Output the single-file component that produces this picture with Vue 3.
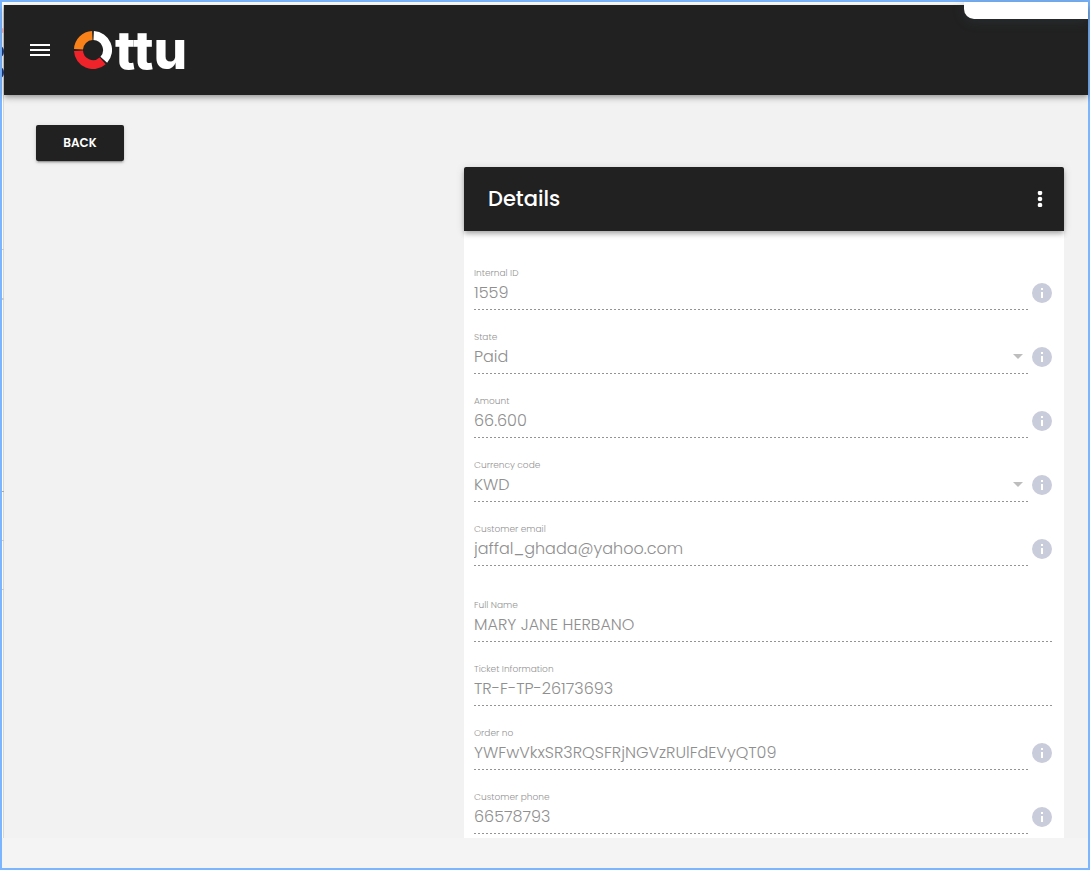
<script setup>
import { ref } from 'vue'

const groups = ref([
  [
    { id: 'internal-id', label: 'Internal ID', value: '1559', info: true },
    { id: 'state', label: 'State', value: 'Paid', info: true, select: true },
    { id: 'amount', label: 'Amount', value: '66.600', info: true },
    { id: 'currency', label: 'Currency code', value: 'KWD', info: true, select: true },
    { id: 'email', label: 'Customer email', value: 'jaffal_ghada@yahoo.com', info: true },
  ],
  [
    { id: 'full-name', label: 'Full Name', value: 'MARY JANE HERBANO' },
    { id: 'ticket', label: 'Ticket Information', value: 'TR-F-TP-26173693' },
    { id: 'order-no', label: 'Order no', value: 'YWFwVkxSR3RQSFRjNGVzRUlFdEVyQT09', info: true },
    { id: 'phone', label: 'Customer phone', value: '66578793', info: true },
  ],
])
</script>

<template>
  <div class="frame">
    <div class="edge" aria-hidden="true">
      <i class="speck pink"></i>
      <i class="speck navy first"></i>
      <i class="speck navy second"></i>
    </div>
    <div class="page">
      <header class="topbar">
        <button class="icon-button" type="button" aria-label="Menu">
          <svg width="20" height="12" viewBox="0 0 20 12"><path fill="#fff" d="M0 0h20v2H0zM0 5h20v2H0zM0 10h20v2H0z" /></svg>
        </button>
        <a class="brand" href="#" aria-label="Ottu">
          <svg width="38" height="38" viewBox="0 0 38 38" fill="none" stroke-width="9">
            <path stroke="#fff" d="M19.7 4.5A14.5 14.5 0 0 1 29.8 28.7" />
            <path stroke="#ef2329" d="M28.7 29.8A14.5 14.5 0 0 1 4.5 19.7" />
            <path stroke="#f98119" d="M4.5 18.3A14.5 14.5 0 0 1 18.3 4.5" />
          </svg>
          <span class="wordmark">ttu</span>
        </a>
      </header>
      <main class="content">
        <button class="back" type="button">BACK</button>
        <section class="card">
          <div class="card-head">
            <h1>Details</h1>
            <button class="icon-button" type="button" aria-label="More options">
              <svg width="6" height="16" viewBox="0 0 6 16" fill="#fff"><circle cx="3" cy="2" r="2.3" /><circle cx="3" cy="8" r="2.3" /><circle cx="3" cy="14" r="2.3" /></svg>
            </button>
          </div>
          <form class="card-body">
            <div v-for="(group, g) in groups" :key="g" class="group">
              <div v-for="field in group" :key="field.id" class="row">
                <div class="field">
                  <label :for="field.id">{{ field.label }}</label>
                  <div class="control">
                    <select v-if="field.select" :id="field.id" disabled>
                      <option>{{ field.value }}</option>
                    </select>
                    <input v-else :id="field.id" type="text" :value="field.value" disabled />
                    <svg v-if="field.select" class="caret" width="10" height="5" viewBox="0 0 10 5"><path fill="#bdbdbd" d="M0 0h10L5 5z" /></svg>
                  </div>
                </div>
                <svg v-if="field.info" class="info" width="24" height="24" viewBox="0 0 24 24"><path fill="#c9ccda" d="M13 9h-2V7h2m0 10h-2v-6h2m-1-9A10 10 0 0 0 2 12a10 10 0 0 0 10 10 10 10 0 0 0 10-10A10 10 0 0 0 12 2z" /></svg>
              </div>
            </div>
          </form>
        </section>
      </main>
    </div>
    <div class="popup"></div>
  </div>
</template>

<style>
body {
  background: #f4f4f4;
}
</style>

<style scoped>
.frame {
  position: relative;
  display: flex;
  align-items: flex-start;
  box-sizing: border-box;
  min-height: 100vh;
  padding-top: 3px;
  border: 2px solid #7ab5fd;
  background: linear-gradient(#fff 3px, #f4f4f4 3px);
  font-family: Poppins, Inter, "Open Sans", sans-serif;
}
.edge {
  position: relative;
  align-self: stretch;
  width: 2px;
  margin-bottom: 30px;
  background:
    linear-gradient(#ccc, #ccc) 0 244px / 2px 1px no-repeat,
    linear-gradient(#ccc, #ccc) 0 293px / 2px 2px no-repeat,
    linear-gradient(#aaa, #aaa) 0 486px / 2px 1px no-repeat,
    linear-gradient(#ccc, #ccc) 0 535px / 2px 1px no-repeat,
    linear-gradient(#ccc, #ccc) 0 584px / 2px 1px no-repeat,
    linear-gradient(to right, #fff 1px, #d8d8d8 1px);
  overflow: hidden;
}
.speck {
  position: absolute;
  border-radius: 50%;
}
.pink {
  top: 23px;
  right: 0;
  width: 4px;
  height: 5px;
  background: #f7b9bd;
}
.navy {
  right: 0;
  width: 8px;
  height: 11px;
  background: #1c3a78;
}
.first {
  top: 41px;
}
.second {
  top: 62px;
}
.page {
  flex: 1;
  min-width: 0;
  background: #f2f2f2;
}
.topbar {
  position: relative;
  display: flex;
  align-items: center;
  gap: 16px;
  height: 90px;
  padding: 0 18px;
  background: #212121;
  box-shadow: 0 2px 4px -1px rgba(0, 0, 0, 0.2), 0 4px 5px rgba(0, 0, 0, 0.14), 0 1px 10px rgba(0, 0, 0, 0.12);
}
.icon-button {
  display: flex;
  align-items: center;
  justify-content: center;
  width: 36px;
  height: 36px;
  padding: 0;
  border: 0;
  background: none;
}
.brand {
  display: flex;
  align-items: center;
  gap: 3px;
  color: #fff;
  text-decoration: none;
}
.wordmark {
  font-family: Inter, sans-serif;
  font-size: 53px;
  font-weight: 800;
  line-height: 38px;
}
.content {
  display: flex;
  flex-direction: column;
  align-items: flex-start;
  gap: 6px;
  padding: 30px 24px 0 32px;
}
.back {
  min-width: 88px;
  height: 36px;
  padding: 0 16px;
  border: 0;
  border-radius: 2px;
  background: #212121;
  box-shadow: 0 3px 1px -2px rgba(0, 0, 0, 0.2), 0 2px 2px rgba(0, 0, 0, 0.14), 0 1px 5px rgba(0, 0, 0, 0.12);
  color: #fff;
  font-family: inherit;
  font-size: 12px;
  font-weight: 600;
}
.card {
  width: 100%;
  max-width: 600px;
  margin-left: auto;
  background: #fff;
}
.card-head {
  display: flex;
  align-items: center;
  justify-content: space-between;
  box-sizing: border-box;
  height: 64px;
  padding: 0 6px 0 24px;
  border-radius: 2px 2px 0 0;
  background: #212121;
  box-shadow: 0 2px 4px -1px rgba(0, 0, 0, 0.2), 0 4px 5px rgba(0, 0, 0, 0.14), 0 1px 10px rgba(0, 0, 0, 0.12);
  color: #fff;
}
h1 {
  margin: 0;
  font-size: 21px;
  font-weight: 500;
  line-height: 30px;
}
.card-body {
  display: flex;
  flex-direction: column;
  gap: 12px;
  padding: 15px 10px 4px;
}
.row {
  display: flex;
}
.field {
  flex: 1;
  min-width: 0;
  box-sizing: border-box;
  height: 64px;
  padding-top: 20px;
  background: repeating-linear-gradient(to right, #949494 0 2px, transparent 2px 4px) bottom / 100% 1px no-repeat;
}
label {
  display: block;
  height: 14px;
  color: #949494;
  font-size: 9px;
  font-weight: 300;
  line-height: 14px;
}
.control {
  display: flex;
  align-items: center;
  height: 24px;
  padding-right: 7px;
}
input,
select {
  flex: 1;
  min-width: 0;
  height: 24px;
  margin: 0;
  padding: 0;
  border: 0;
  background: none;
  color: #8f8f8f;
  font-family: inherit;
  font-size: 16px;
  font-weight: 300;
  opacity: 1;
  appearance: none;
}
.info {
  flex: none;
  margin-top: 35px;
}
.popup {
  position: absolute;
  top: 0;
  right: 0;
  width: 124px;
  height: 17px;
  border-bottom-left-radius: 10px;
  background: #fff;
  box-shadow: 0 2px 12px rgba(60, 80, 90, 0.3);
}
</style>
